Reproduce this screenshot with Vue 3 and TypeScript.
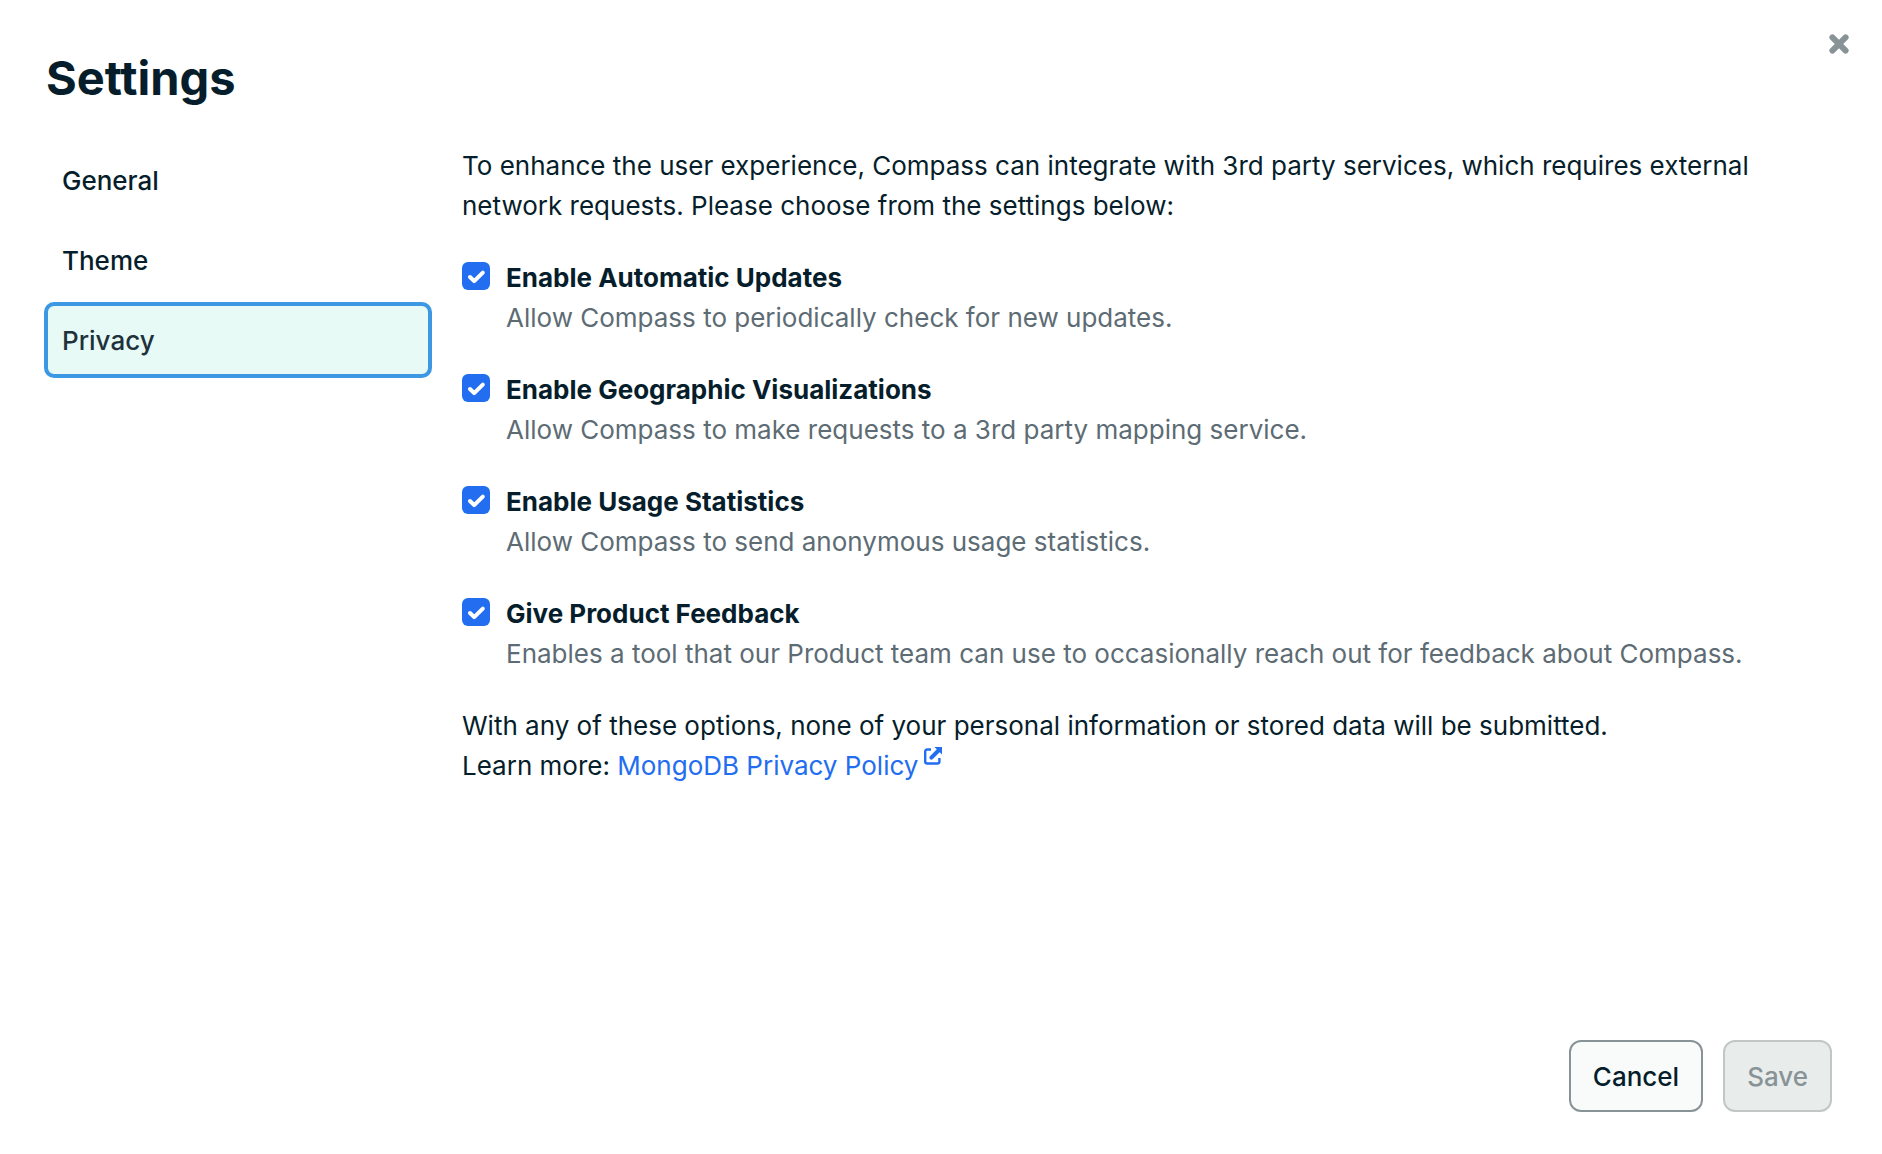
<script setup lang="ts">
import { reactive, ref } from 'vue'

interface PrivacyOption {
  id: string
  title: string
  description: string
  enabled: boolean
}

const sections: string[] = ['General', 'Theme', 'Privacy']
const active = ref('Privacy')

const options = reactive<PrivacyOption[]>([
  {
    id: 'auto-updates',
    title: 'Enable Automatic Updates',
    description: 'Allow Compass to periodically check for new updates.',
    enabled: true,
  },
  {
    id: 'maps',
    title: 'Enable Geographic Visualizations',
    description: 'Allow Compass to make requests to a 3rd party mapping service.',
    enabled: true,
  },
  {
    id: 'usage',
    title: 'Enable Usage Statistics',
    description: 'Allow Compass to send anonymous usage statistics.',
    enabled: true,
  },
  {
    id: 'feedback',
    title: 'Give Product Feedback',
    description:
      'Enables a tool that our Product team can use to occasionally reach out for feedback about Compass.',
    enabled: true,
  },
])
</script>

<template>
  <div class="modal">
    <header class="header">
      <h1>Settings</h1>
      <button type="button" class="close" aria-label="Close">
        <svg viewBox="0 0 20 20" width="20" height="20" aria-hidden="true">
          <path d="M3.4 3.4 16.6 16.6M16.6 3.4 3.4 16.6" />
        </svg>
      </button>
    </header>

    <div class="body">
      <nav class="sidebar">
        <button
          v-for="section in sections"
          :key="section"
          type="button"
          class="tab"
          :class="{ active: section === active }"
          @click="active = section"
        >
          {{ section }}
        </button>
      </nav>

      <main class="content">
        <p>
          To enhance the user experience, Compass can integrate with 3rd party services, which
          requires external network requests. Please choose from the settings below:
        </p>

        <div v-for="option in options" :key="option.id" class="option">
          <input
            :id="option.id"
            v-model="option.enabled"
            type="checkbox"
            :aria-describedby="option.id + '-text'"
          />
          <div>
            <label :for="option.id">{{ option.title }}</label>
            <p :id="option.id + '-text'" class="description">{{ option.description }}</p>
          </div>
        </div>

        <p>
          With any of these options, none of your personal information or stored data will be
          submitted.<br />
          Learn more:
          <a href="#privacy-policy">MongoDB Privacy Policy<svg
            class="external" viewBox="0 0 18 18" width="18" height="18" aria-hidden="true"
          >
            <path class="frame" d="M7 2.5H3.2a2 2 0 0 0-2 2v10a2 2 0 0 0 2 2h10.2a2 2 0 0 0 2-2V11" />
            <path class="shaft" d="M7.4 10.6 14 4" />
            <path class="head" d="M10.4 0H18v7.6z" />
          </svg></a>
        </p>
      </main>
    </div>

    <footer class="footer">
      <button type="button" class="button">Cancel</button>
      <button type="button" class="button" disabled>Save</button>
    </footer>
  </div>
</template>

<style>
body {
  margin: 0;
  background: #ffffff;
}
</style>

<style scoped>
.modal {
  box-sizing: border-box;
  display: flex;
  flex-direction: column;
  min-height: 100vh;
  padding: 32px 32px 42px 44px;
  color: #061e2b;
  font-family: Inter, "Liberation Sans", sans-serif;
  font-size: 26px;
  line-height: 40px;
}

button {
  font: inherit;
  color: inherit;
  cursor: pointer;
}

h1 {
  margin: 14px 2px 0;
  font-size: 47px;
  font-weight: 700;
  line-height: 64px;
}

.header {
  display: flex;
  justify-content: space-between;
  align-items: flex-start;
}

.close {
  display: flex;
  padding: 2px 1px;
  border: 0;
  background: none;
}

.close path {
  fill: none;
  stroke: #889397;
  stroke-width: 6;
  stroke-linecap: round;
}

.body {
  display: flex;
  flex: 1;
  gap: 30px;
  padding: 32px 48px 0 0;
}

.sidebar {
  display: flex;
  flex: 0 0 388px;
  flex-direction: column;
  gap: 4px;
}

.tab {
  box-sizing: border-box;
  height: 76px;
  padding: 2px 14px 0;
  border: 4px solid transparent;
  border-radius: 10px;
  background: transparent;
  font-weight: 500;
  text-align: left;
}

.tab.active {
  border-color: #3d98e4;
  background: #e7faf6;
  color: #21313c;
}

.content {
  display: flex;
  flex: 1;
  flex-direction: column;
  gap: 32px;
  padding-top: 4px;
}

p {
  margin: 0;
}

.option {
  display: flex;
  gap: 16px;
}

.option input {
  flex: none;
  width: 28px;
  height: 28px;
  margin: 4px 0 0;
  border-radius: 6px;
  appearance: none;
  border: 2px solid #889397;
  background: #ffffff;
}

.option input:checked {
  border: 0;
  background: #226df0
    url("data:image/svg+xml,%3Csvg xmlns='http://www.w3.org/2000/svg' viewBox='0 0 28 28'%3E%3Cpath d='M8 15l4.2 4.2L20.8 10.6' fill='none' stroke='white' stroke-width='4' stroke-linecap='round' stroke-linejoin='round'/%3E%3C/svg%3E");
}

label {
  display: block;
  font-weight: 700;
}

.description {
  color: #5d6c74;
}

a {
  color: #226df0;
  text-decoration: none;
}

.external {
  margin-left: 6px;
  vertical-align: 10px;
}

.external path {
  fill: none;
  stroke: currentColor;
}

.external .frame {
  stroke-width: 2.4;
}

.external .shaft {
  stroke-width: 4;
  stroke-linecap: round;
}

.external .head {
  fill: currentColor;
  stroke: none;
}

.footer {
  display: flex;
  justify-content: flex-end;
  gap: 20px;
  padding-right: 18px;
}

.button {
  height: 72px;
  padding: 2px 22px 0;
  border: 2px solid #889397;
  border-radius: 12px;
  background: #f9fbfa;
  font-weight: 500;
}

.button:disabled {
  border-color: #c1c7c6;
  background: #e8edeb;
  color: #889397;
  cursor: default;
}
</style>
